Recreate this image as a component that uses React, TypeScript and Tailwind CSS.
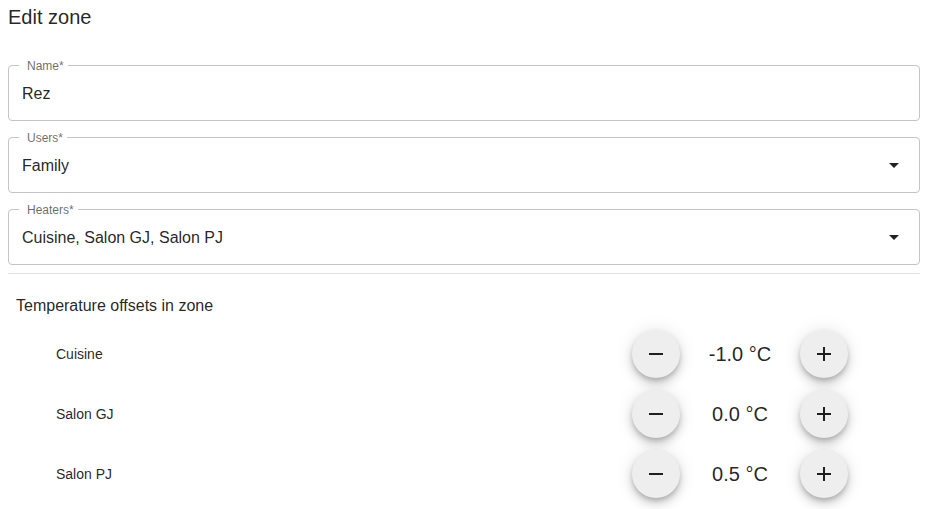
import { FC } from "react";

const ArrowDown: FC = () => (
  <svg viewBox="0 0 24 24" className="w-6 h-6 fill-[#000000de]">
    <path d="M7 10l5 5 5-5z" />
  </svg>
);

const Field: FC<{ label: string; value: string; select?: boolean }> = ({
  label,
  value,
  select,
}) => (
  <div className="relative h-14 border border-[#c4c4c4] rounded flex items-center px-[13px]">
    <span className="absolute -top-[8px] left-[10px] pl-2 pr-1 bg-white text-[12px] leading-4 text-[#00000099]">
      {label}
    </span>
    <span className="text-base text-[#000000de] flex-1 pt-px">{value}</span>
    {select && (
      <span className="absolute right-[13px] top-1/2 -translate-y-1/2">
        <ArrowDown />
      </span>
    )}
  </div>
);

const RoundButton: FC<{ d: string }> = ({ d }) => (
  <button className="w-12 h-12 rounded-full bg-[#eeeeee] grid place-items-center shadow-[0px_3px_5px_-1px_rgba(0,0,0,0.2),0px_6px_10px_0px_rgba(0,0,0,0.14),0px_1px_18px_0px_rgba(0,0,0,0.12)]">
    <svg viewBox="0 0 24 24" className="w-6 h-6 fill-[#000000de]">
      <path d={d} />
    </svg>
  </button>
);

const heaters = [
  { name: "Cuisine", offset: "-1.0 °C" },
  { name: "Salon GJ", offset: "0.0 °C" },
  { name: "Salon PJ", offset: "0.5 °C" },
];

const App: FC = () => {
  return (
    <div className="bg-white min-h-screen pl-2 pr-[9px] font-['Liberation_Sans',Arial,sans-serif] text-[#000000de]">
      <div className="h-[34px] flex items-center text-xl">Edit zone</div>
      <div className="flex flex-col gap-4 mt-[31px]">
        <Field label="Name*" value="Rez" />
        <Field label="Users*" value="Family" select />
        <Field label="Heaters*" value="Cuisine, Salon GJ, Salon PJ" select />
      </div>
      <div className="mt-2 border-t border-[#e0e0e0]" />
      <div className="mt-5 pl-2 h-6 leading-6 text-base">Temperature offsets in zone</div>
      <div className="mt-3 flex flex-col gap-3 pl-12 pr-[72px]">
        {heaters.map((h) => (
          <div key={h.name} className="flex items-center h-12">
            <span className="flex-1 text-sm">{h.name}</span>
            <RoundButton d="M19 13H5v-2h14v2z" />
            <span className="w-[120px] text-center text-xl">{h.offset}</span>
            <RoundButton d="M19 13h-6v6h-2v-6H5v-2h6V5h2v6h6v2z" />
          </div>
        ))}
      </div>
    </div>
  );
};

export default App;
